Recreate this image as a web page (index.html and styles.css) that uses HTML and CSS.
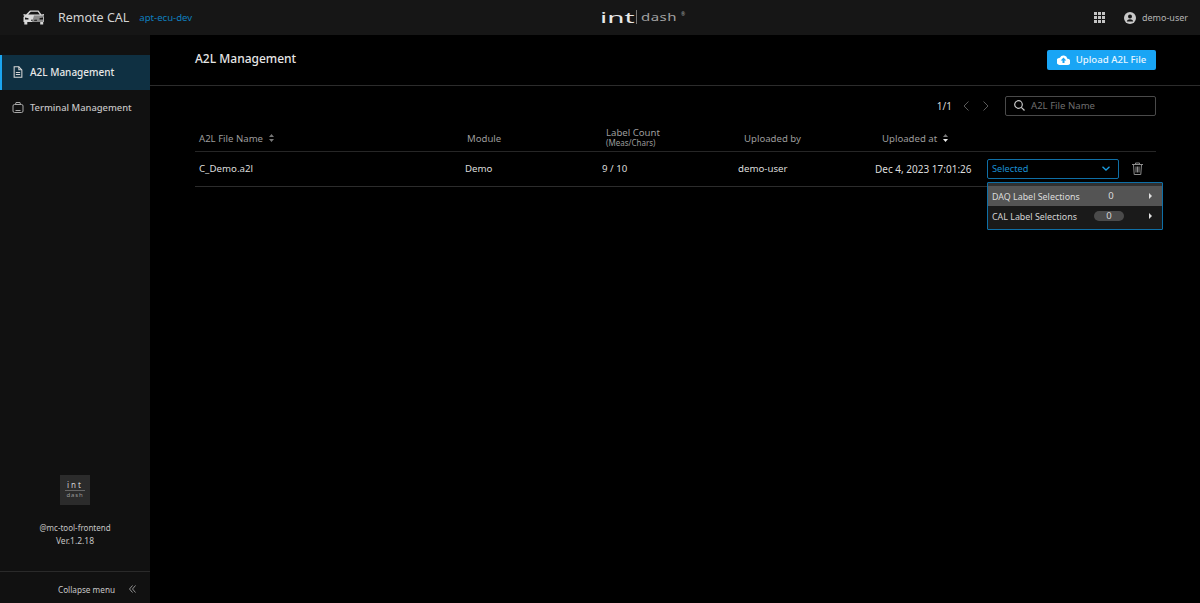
FILE: index.html
```html
<!DOCTYPE html>
<html lang="en">
<head>
    <meta charset="UTF-8">
    <meta name="viewport" content="width=device-width, initial-scale=1.0">
    <title>A2L Management</title>
    <link rel="stylesheet" href="styles.css">
</head>
<body>
    <div class="topbar">
        <div class="topbar-left">
            <svg class="car-icon" width="22" height="15" viewBox="0 0 22 15">
                <path fill="#d8d8d8" d="M7 .5h8.500l3 4 2.500-.4v1.300l-1 .4 1 1.300V12h-.8v2.500h-3V12H4.300v2.500h-3V12H.5V7.100l1-1.300-1-.4V4.100l2.500.4z"/>
                <path fill="#161616" d="M7.800 1.800h7l2 2.800H5.200zM2 7.500l3.500.8v1.300H2zM20 7.500l-3.500.8v1.300H20zM8 9.800h6v.9H8z"/>
                <path fill="#8a8a8a" d="M11 5.500h9.500V12H9z"/>
                <path fill="#161616" d="M20 7.500l-3.500.8v1.300H20zM11.500 9.800H14v.9h-3z"/>
            </svg>
            <span class="app-name">Remote CAL</span>
            <span class="env-name">apt-ecu-dev</span>
        </div>
        <div class="logo">
            <span class="logo-int">int</span><span class="logo-bar"></span><span class="logo-dash">dash</span><span class="logo-reg">®</span>
        </div>
        <div class="topbar-right">
            <svg width="11" height="11" viewBox="0 0 11 11" fill="#c4c4c4">
                <rect x="0" y="0" width="3" height="3"/><rect x="4" y="0" width="3" height="3"/><rect x="8" y="0" width="3" height="3"/>
                <rect x="0" y="4" width="3" height="3"/><rect x="4" y="4" width="3" height="3"/><rect x="8" y="4" width="3" height="3"/>
                <rect x="0" y="8" width="3" height="3"/><rect x="4" y="8" width="3" height="3"/><rect x="8" y="8" width="3" height="3"/>
            </svg>
            <div class="user">
                <svg width="12" height="12" viewBox="0 0 12 12">
                    <circle cx="6" cy="6" r="6" fill="#c8c8c8"/>
                    <circle cx="6" cy="4.500" r="2" fill="#161616"/>
                    <path fill="#161616" d="M2.800 9.500c.3-1.600 1.600-2.300 3.200-2.300s2.900.7 3.200 2.300z"/>
                </svg>
                <span>demo-user</span>
            </div>
        </div>
    </div>

    <div class="layout">
        <div class="sidebar">
            <div class="nav">
                <a class="nav-item active" href="#">
                    <svg width="12" height="12" viewBox="0 0 12 14" fill="none" stroke="#d8d8d8" stroke-width="1.200">
                        <path d="M1.500 1h5.500L10.500 4.500V13h-9z"/>
                        <path d="M7 1v3.500h3.500M3.500 7.500h5M3.500 10h5"/>
                    </svg>
                    <span>A2L Management</span>
                </a>
                <a class="nav-item" href="#">
                    <svg width="12" height="11" viewBox="0 0 12 11" fill="none" stroke="#a8a8a8" stroke-width="1">
                        <rect x="1" y="2.500" width="10" height="8" rx="1.500"/>
                        <path d="M3.500 2.500 4 .5h4l.5 2M3.500 8.500h5"/>
                    </svg>
                    <span>Terminal Management</span>
                </a>
            </div>
            <div class="side-info">
                <div class="side-logo">
                    <span class="side-logo-int">int</span>
                    <span class="side-logo-dash">dash</span>
                </div>
                <div class="side-pkg">@mc-tool-frontend</div>
                <div class="side-ver">Ver.1.2.18</div>
            </div>
            <div class="collapse">
                <span>Collapse menu</span>
                <svg width="7" height="8" viewBox="0 0 7 8" fill="none" stroke="#a0a0a0" stroke-width="0.900">
                    <path d="M3.500.5.500 4l3 3.500M6.500.5 3.500 4l3 3.500"/>
                </svg>
            </div>
        </div>

        <div class="main">
            <div class="page-head">
                <h1>A2L Management</h1>
                <button class="upload-btn">
                    <svg width="13" height="10" viewBox="0 0 13 10">
                        <path fill="#fff" d="M10.400 3.800A4 4 0 0 0 2.900 2.700 3.400 3.400 0 0 0 3.300 10h7a2.700 2.700 0 0 0 .1-6.200z"/>
                        <path fill="#19a5f5" d="M6.500 2.600 9.300 5.600H7.500v2.400h-2V5.600H3.700z"/>
                    </svg>
                    Upload A2L File
                </button>
            </div>

            <div class="content">
                <div class="toolbar">
                    <span class="pager">1/1</span>
                    <svg class="pager-arrow" width="6" height="10" viewBox="0 0 6 10"><path d="M5.500.5 1 5l4.500 4.500"/></svg>
                    <svg class="pager-arrow" width="6" height="10" viewBox="0 0 6 10"><path d="M.5.500 5 5 .5 9.500"/></svg>
                    <div class="search">
                        <svg width="11" height="11" viewBox="0 0 11 11" fill="none" stroke="#c8c8c8" stroke-width="1.200">
                            <circle cx="4.500" cy="4.500" r="3.800"/>
                            <path d="M7.300 7.300 10.500 10.500"/>
                        </svg>
                        <span>A2L File Name</span>
                    </div>
                </div>

                <div class="table-head">
                    <div class="th">A2L File Name
                        <svg class="sort" width="5" height="8" viewBox="0 0 5 8"><path fill="#777" d="M2.500 0 5 3H0zM2.500 8 0 5h5z"/></svg>
                    </div>
                    <div class="th">Module</div>
                    <div class="th th-stack">Label Count<small>(Meas/Chars)</small></div>
                    <div class="th">Uploaded by</div>
                    <div class="th">Uploaded at
                        <svg class="sort" width="5" height="8" viewBox="0 0 5 8"><path fill="#777" d="M2.500 0 5 3H0z"/><path fill="#eee" d="M2.500 8 0 5h5z"/></svg>
                    </div>
                </div>

                <div class="table-row">
                    <div class="td">C_Demo.a2l</div>
                    <div class="td">Demo</div>
                    <div class="td">9 / 10</div>
                    <div class="td">demo-user</div>
                    <div class="td td-date">Dec 4, 2023 17:01:26</div>
                    <div class="select">
                        <span>Selected</span>
                        <svg width="8" height="5" viewBox="0 0 8 5" fill="none" stroke="#1a9ce0" stroke-width="1.300"><path d="M.5.700 4 4 7.500.7"/></svg>
                    </div>
                    <svg class="trash" width="11" height="13" viewBox="0 0 11 13" fill="none" stroke="#8c8c8c" stroke-width="1">
                        <path d="M0 2.500h11M3.500 2.500V1h4v1.500"/>
                        <path d="M1.500 2.500 2.200 12.500h6.600l.7-10z"/>
                        <path d="M4 4.500v6M5.500 4.500v6M7 4.500v6"/>
                    </svg>
                </div>

                <div class="dropdown">
                    <div class="dropdown-item hover">
                        <span class="dropdown-label">DAQ Label Selections</span>
                        <span class="count">0</span>
                        <span class="caret"></span>
                    </div>
                    <div class="dropdown-item">
                        <span class="dropdown-label">CAL Label Selections</span>
                        <span class="count pill">0</span>
                        <span class="caret"></span>
                    </div>
                </div>
            </div>
        </div>
    </div>
</body>
</html>
```
FILE: styles.css
```css
* {
    box-sizing: border-box;
}

html, body {
    height: 100%;
}

body {
    margin: 0;
    padding: 0;
    font-family: "Noto Sans", Arial, sans-serif;
    background: #000;
    color: #e6e6e6;
    overflow: hidden;
}

.topbar {
    height: 35px;
    background: #161616;
    display: flex;
    justify-content: space-between;
    align-items: center;
    padding: 0 12px 0 23px;
    position: relative;
}

.topbar-left {
    display: flex;
    align-items: center;
}

.car-icon {
    margin-right: 13px;
}

.app-name {
    font-size: 12.500px;
    color: #d4d4d4;
    margin-right: 10px;
}

.env-name {
    font-size: 9.600px;
    color: #0f7fbf;
}

.logo {
    position: absolute;
    left: 600px;
    top: 8px;
    display: flex;
    align-items: center;
    height: 18px;
}

.logo-int {
    font-size: 14px;
    color: #e8e8e8;
    width: 36px;
    transform: scaleX(2);
    transform-origin: left center;
}

.logo-bar {
    width: 1px;
    height: 14px;
    background: #777;
    margin-right: 4px;
}

.logo-dash {
    font-size: 10px;
    color: #a0a0a0;
    width: 40px;
    letter-spacing: 0.300px;
    transform: scaleX(1.500);
    transform-origin: left center;
}

.logo-reg {
    font-size: 5px;
    color: #a0a0a0;
    margin-top: -6px;
}

.topbar-right {
    display: flex;
    align-items: center;
    gap: 19px;
}

.user {
    display: flex;
    align-items: center;
    gap: 6px;
    font-size: 9px;
    color: #b4b4b4;
}

.layout {
    display: flex;
    height: 568px;
}

.sidebar {
    width: 150px;
    background: #111;
    display: flex;
    flex-direction: column;
}

.nav {
    padding-top: 20px;
    flex: 1;
}

.nav-item {
    height: 35px;
    display: flex;
    align-items: center;
    gap: 6px;
    padding-left: 12px;
    font-size: 9.400px;
    font-weight: 500;
    color: #c4c4c4;
    text-decoration: none;
}

.nav-item span {
    margin-bottom: 1px;
}

.nav-item svg {
    margin-bottom: 1px;
}

.nav-item.active {
    background: #0f3042;
    border-left: 2px solid #1ba5f0;
    padding-left: 10px;
    font-size: 10px;
    color: #e8e8e8;
}

.side-info {
    text-align: center;
    font-size: 8.500px;
    color: #c4c4c4;
    padding-bottom: 24px;
}

.side-logo {
    width: 30px;
    height: 30px;
    margin: 0 auto 16px;
    background: #2b2b2b;
    display: flex;
    flex-direction: column;
    align-items: center;
    justify-content: center;
}

.side-logo-int {
    font-size: 8px;
    line-height: 10px;
    color: #cfcfcf;
    width: 20px;
    text-align: center;
    border-bottom: 1px solid #666;
    letter-spacing: 2px;
}

.side-logo-dash {
    font-size: 6px;
    line-height: 9px;
    color: #9a9a9a;
    letter-spacing: 0.800px;
}

.side-pkg {
    font-size: 8px;
    line-height: 13px;
}

.side-ver {
    line-height: 13px;
}

.collapse {
    height: 32px;
    border-top: 1px solid #2a2a2a;
    display: flex;
    align-items: center;
    justify-content: flex-end;
    gap: 14px;
    padding: 3px 14px 0 0;
    font-size: 8.200px;
    color: #c8c8c8;
}

.main {
    flex: 1;
    background: #000;
    position: relative;
}

.page-head {
    height: 51px;
    border-bottom: 1px solid #2c2c2c;
    padding: 0 44px 0 45px;
    display: flex;
    justify-content: space-between;
    align-items: center;
}

.page-head h1 {
    margin: 0 0 3px;
    font-size: 12px;
    font-weight: 500;
    color: #e6e6e6;
}

.upload-btn {
    width: 109px;
    height: 20px;
    margin-bottom: 1px;
    border: none;
    border-radius: 2px;
    background: #19a5f5;
    color: #e8f6ff;
    font-family: inherit;
    font-size: 9.600px;
    font-weight: 500;
    display: flex;
    align-items: center;
    justify-content: center;
    gap: 6px;
}

.content {
    padding: 10px 44px 0 45px;
    position: relative;
}

.toolbar {
    display: flex;
    justify-content: flex-end;
    align-items: center;
    height: 20px;
}

.pager {
    font-size: 10px;
    color: #d8d8d8;
}

.pager-arrow {
    fill: none;
    stroke: #5a5a5a;
    margin-left: 11px;
}

.pager-arrow + .pager-arrow {
    margin-left: 14px;
}

.search {
    width: 151px;
    height: 20px;
    margin-left: 16px;
    border: 1px solid #4a4a4a;
    border-radius: 2px;
    display: flex;
    align-items: center;
    gap: 6px;
    padding: 0 0 1px 8px;
    font-size: 9.600px;
    color: #6e6e6e;
}

.table-head {
    display: grid;
    grid-template-columns: 268px 139px 138px 138px 1fr;
    height: 36px;
    padding-left: 4px;
    border-bottom: 1px solid #262626;
    align-items: center;
}

.th {
    font-size: 9.600px;
    color: #9c9c9c;
    padding-top: 9px;
    display: flex;
    align-items: center;
    gap: 6px;
}

.th-stack {
    display: block;
    padding-top: 9px;
    line-height: 10px;
}

.th-stack small {
    display: block;
    font-size: 8px;
}

.table-row {
    display: grid;
    grid-template-columns: 266px 137px 136px 137px 112px 132px auto;
    height: 35px;
    padding: 0 0 1px 4px;
    border-bottom: 1px solid #2c2c2c;
    align-items: center;
}

.td {
    font-size: 9.700px;
    color: #dcdcdc;
}

.td-date {
    font-size: 10px;
}

.select {
    height: 20px;
    border: 1px solid #0f6fa6;
    border-radius: 2px;
    display: flex;
    align-items: center;
    justify-content: space-between;
    padding: 0 8px 0 4px;
    font-size: 9.200px;
    color: #1a8fd0;
}

.trash {
    margin-left: 13px;
}

.dropdown {
    position: absolute;
    left: 837px;
    top: 96px;
    width: 176px;
    height: 48px;
    border: 1px solid #0f6fa6;
    border-radius: 1px;
    background: #1a1a1a;
}

.dropdown-item {
    height: 20px;
    display: flex;
    align-items: center;
    padding: 0 9px 0 4px;
    font-size: 8.900px;
    color: #d4d4d4;
}

.dropdown-item.hover {
    height: 23px;
    padding-top: 3px;
    background: linear-gradient(#303030 0, #303030 3px, #545454 3px);
    color: #dcdcdc;
}

.dropdown-label {
    width: 102px;
}

.count {
    width: 30px;
    height: 10px;
    line-height: 10px;
    text-align: center;
    margin-right: 25px;
    font-size: 9.500px;
}

.hover .count {
    padding-left: 4px;
}

.count.pill {
    background: #4a4a4a;
    border-radius: 5px;
}

.caret {
    width: 0;
    height: 0;
    border-left: 3.500px solid #e0e0e0;
    border-top: 3px solid transparent;
    border-bottom: 3px solid transparent;
}
```
